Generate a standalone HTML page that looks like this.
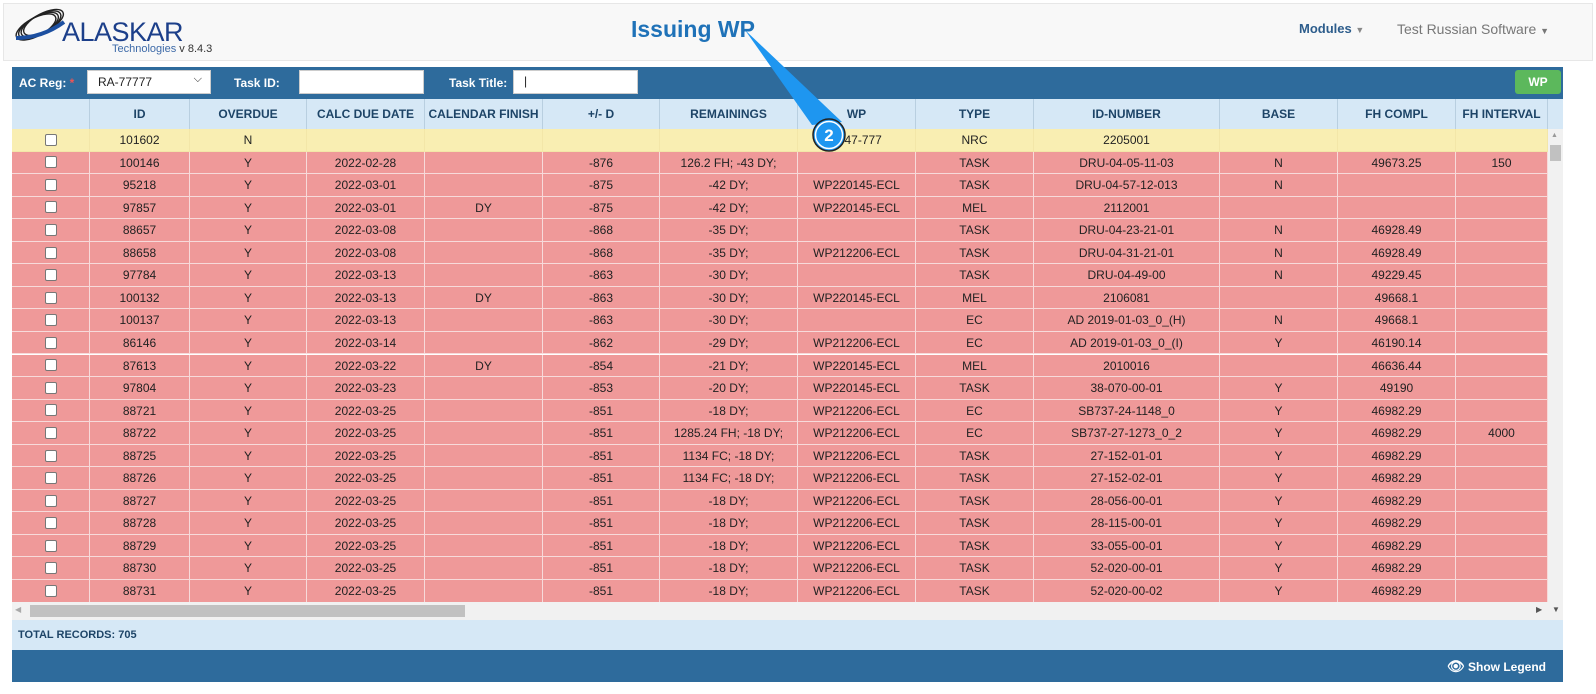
<!DOCTYPE html>
<html><head><meta charset="utf-8"><style>
*{box-sizing:border-box;margin:0;padding:0}
body{width:1596px;height:694px;background:#fff;font-family:"Liberation Sans",Arial,sans-serif;position:relative;overflow:hidden;font-size:12px;color:#222}
.hdr{position:absolute;left:3px;top:3px;width:1590px;height:58px;background:#f8f8f8;border:1px solid #e7e7e7}
.title{position:absolute;left:631px;top:16px;font-size:23px;font-weight:bold;color:#1f72b8}
.nav{position:absolute;top:21px;font-size:14px}
.bar{position:absolute;left:12px;top:67px;width:1551px;height:32px;background:#2e6b9c}
.lbl{position:absolute;top:9px;color:#fff;font-weight:bold;font-size:12px}
.inp{position:absolute;top:3px;height:24px;background:#fff;border:1px solid #ccc}
.th{position:absolute;top:99px;height:30px;background:#d6e8f6;border-right:1px solid #b9cfe0;color:#1d4467;font-weight:bold;font-size:12px;text-align:center;line-height:30px;white-space:nowrap;overflow:hidden}
.row{position:absolute;left:12px;width:1536px;height:22.55px}
.c{position:absolute;top:0;height:100%;border-right:1px solid #f8dede;border-bottom:1px solid #f5d0d0;text-align:center;font-size:12px;line-height:22px;white-space:nowrap;overflow:hidden}
.cb{display:inline-block;width:12px;height:12px;border:1px solid #777;border-radius:2px;background:#fff;vertical-align:middle;margin-top:-2px}
</style></head><body>
<div class="hdr"></div>
<svg style="position:absolute;left:12px;top:8px" width="58" height="34" viewBox="0 0 58 34">
<g fill="none" stroke="#222" stroke-width="1.4">
<ellipse cx="24" cy="19" rx="22" ry="9" transform="rotate(-28 24 19)"/>
<ellipse cx="26.5" cy="17.5" rx="22" ry="9" transform="rotate(-28 26.5 17.5)"/>
<ellipse cx="29" cy="16" rx="22" ry="9" transform="rotate(-28 29 16)"/>
<ellipse cx="31.5" cy="14.5" rx="22" ry="9" transform="rotate(-28 31.5 14.5)"/>
</g><path d="M4 30 Q30 30 52 14" stroke="#1c4fa0" stroke-width="4" fill="none"/></svg>
<div style="position:absolute;left:62px;top:19px;font-size:27px;color:#1c3f8a;letter-spacing:-0.5px;line-height:27px">ALASKAR</div>
<div style="position:absolute;left:112px;top:43px;font-size:11px;color:#3d6aa8">Technologies <span style="color:#333">v 8.4.3</span></div>
<div class="title">Issuing WP</div>
<div class="nav" style="left:1299px;font-weight:bold;color:#2d5d8c;font-size:13px">Modules <span style="font-size:9px;color:#888">▼</span></div>
<div class="nav" style="left:1397px;color:#777;font-size:14px">Test Russian Software <span style="font-size:9px">▼</span></div>
<div class="bar">
<div class="lbl" style="left:7px">AC Reg: <span style="color:#e55">*</span></div>
<div class="inp" style="left:75px;width:124px;font-size:12px;padding:4px 10px">RA-77777<span style="position:absolute;right:8px;top:2px;font-size:11px">⌵</span></div>
<div class="lbl" style="left:222px">Task ID:</div>
<div class="inp" style="left:287px;width:125px"></div>
<div class="lbl" style="left:437px">Task Title:</div>
<div class="inp" style="left:501px;width:125px;padding:3px 10px">|</div>
<div style="position:absolute;left:1503px;top:3px;width:46px;height:24px;background:#5cb85c;border-radius:3px;color:#fff;font-weight:bold;text-align:center;line-height:24px">WP</div>
</div>
<div id="t"></div>
<div style="position:absolute;left:1548px;top:99px;width:15px;height:30px;background:#d6e8f6"></div>
<div style="position:absolute;left:1548px;top:129px;width:15px;height:473px;background:#f1f1f1"><div style="position:absolute;left:2px;top:16px;width:11px;height:16px;background:#c1c1c1"></div><div style="position:absolute;left:3px;top:3px;font-size:7px;color:#999">▲</div></div>
<div style="position:absolute;left:12px;top:602px;width:1551px;height:18px;background:#f1f1f1"><div style="position:absolute;left:18px;top:3px;width:435px;height:12px;background:#c1c1c1"></div><div style="position:absolute;left:3px;top:3px;font-size:8px;color:#aaa">◀</div><div style="position:absolute;left:1524px;top:3px;font-size:8px;color:#555">▶</div><div style="position:absolute;left:1540px;top:3px;font-size:8px;color:#555">▼</div></div>
<div style="position:absolute;left:12px;top:620px;width:1551px;height:30px;background:#d6e8f6;color:#1d4467;font-weight:bold;font-size:11px;line-height:30px;padding-left:6px">TOTAL RECORDS: 705</div>
<div style="position:absolute;left:12px;top:650px;width:1551px;height:32px;background:#2e6b9c;color:#fff;font-weight:bold;font-size:12px"><span style="position:absolute;right:17px;top:8px"><span style="font-size:14px">👁</span> Show Legend</span></div>
<svg style="position:absolute;left:0;top:0" width="1596" height="694"><polygon points="745,30 812,125 842,122" fill="#1e96f0"/><circle cx="829" cy="135" r="16" fill="#1e96f0" stroke="#222" stroke-width="1.5"/><circle cx="829" cy="135" r="13.5" fill="none" stroke="#fff" stroke-width="1.5"/><text x="829" y="141" font-family="Liberation Sans" font-weight="bold" font-size="17" fill="#fff" text-anchor="middle">2</text></svg>
<script>
var cols=[[12,78],[90,100],[190,117],[307,118],[425,118],[543,117],[660,138],[798,118],[916,118],[1034,186],[1220,118],[1338,118],[1456,92]];
var hd=["","ID","OVERDUE","CALC DUE DATE","CALENDAR FINISH","+/- D","REMAININGS","WP","TYPE","ID-NUMBER","BASE","FH COMPL","FH INTERVAL"];
var rows=[
["101602","N","","","","","0747-777","NRC","2205001","","",""],
["100146","Y","2022-02-28","","-876","126.2 FH; -43 DY;","","TASK","DRU-04-05-11-03","N","49673.25","150"],
["95218","Y","2022-03-01","","-875","-42 DY;","WP220145-ECL","TASK","DRU-04-57-12-013","N","",""],
["97857","Y","2022-03-01","DY","-875","-42 DY;","WP220145-ECL","MEL","2112001","","",""],
["88657","Y","2022-03-08","","-868","-35 DY;","","TASK","DRU-04-23-21-01","N","46928.49",""],
["88658","Y","2022-03-08","","-868","-35 DY;","WP212206-ECL","TASK","DRU-04-31-21-01","N","46928.49",""],
["97784","Y","2022-03-13","","-863","-30 DY;","","TASK","DRU-04-49-00","N","49229.45",""],
["100132","Y","2022-03-13","DY","-863","-30 DY;","WP220145-ECL","MEL","2106081","","49668.1",""],
["100137","Y","2022-03-13","","-863","-30 DY;","","EC","AD 2019-01-03_0_(H)","N","49668.1",""],
["86146","Y","2022-03-14","","-862","-29 DY;","WP212206-ECL","EC","AD 2019-01-03_0_(I)","Y","46190.14",""],
["87613","Y","2022-03-22","DY","-854","-21 DY;","WP220145-ECL","MEL","2010016","","46636.44",""],
["97804","Y","2022-03-23","","-853","-20 DY;","WP220145-ECL","TASK","38-070-00-01","Y","49190",""],
["88721","Y","2022-03-25","","-851","-18 DY;","WP212206-ECL","EC","SB737-24-1148_0","Y","46982.29",""],
["88722","Y","2022-03-25","","-851","1285.24 FH; -18 DY;","WP212206-ECL","EC","SB737-27-1273_0_2","Y","46982.29","4000"],
["88725","Y","2022-03-25","","-851","1134 FC; -18 DY;","WP212206-ECL","TASK","27-152-01-01","Y","46982.29",""],
["88726","Y","2022-03-25","","-851","1134 FC; -18 DY;","WP212206-ECL","TASK","27-152-02-01","Y","46982.29",""],
["88727","Y","2022-03-25","","-851","-18 DY;","WP212206-ECL","TASK","28-056-00-01","Y","46982.29",""],
["88728","Y","2022-03-25","","-851","-18 DY;","WP212206-ECL","TASK","28-115-00-01","Y","46982.29",""],
["88729","Y","2022-03-25","","-851","-18 DY;","WP212206-ECL","TASK","33-055-00-01","Y","46982.29",""],
["88730","Y","2022-03-25","","-851","-18 DY;","WP212206-ECL","TASK","52-020-00-01","Y","46982.29",""],
["88731","Y","2022-03-25","","-851","-18 DY;","WP212206-ECL","TASK","52-020-00-02","Y","46982.29",""]];
var h="";
cols.forEach(function(c,i){var w=c[1];h+='<div class="th" style="left:'+c[0]+'px;width:'+w+'px">'+hd[i]+'</div>';});
rows.forEach(function(r,j){var bg=j==0?"#f9eeb2":"#ef9999";h+='<div class="row" style="top:'+(129+j*22.55)+'px;background:'+bg+'">';
cols.forEach(function(c,i){var v=i==0?'<span class="cb"></span>':r[i-1];h+='<div class="c" style="left:'+(c[0]-12)+'px;width:'+c[1]+'px;border-color:'+(j==0?"#f3e6a8":"#f7dada")+'">'+v+'</div>';});
h+='</div>';});
document.getElementById("t").innerHTML=h;
</script>
</body></html>
